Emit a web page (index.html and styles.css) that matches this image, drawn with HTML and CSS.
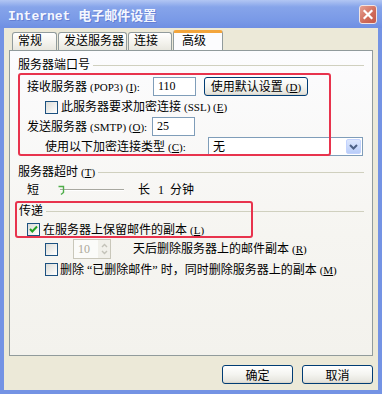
FILE: index.html
```html
<!DOCTYPE html>
<html>
    <head>
        <meta charset="utf-8">
        <title>Internet 电子邮件设置</title>
        <link rel="stylesheet" href="styles.css">
    </head>

    <body>
        <div class="window">
            <div class="titlebar">
                <span class="title">Internet 电子邮件设置</span>
                <span class="closeBtn">
                    <svg width="16" height="17" viewBox="0 0 16 17"><path d="M4.5 5 L11.5 12 M11.5 5 L4.5 12" stroke="#fff" stroke-width="2.2" stroke-linecap="square"/></svg>
                </span>
            </div>

            <div class="frame">
                <!-- tab strip -->
                <div class="tabs">
                    <span class="tab tabGeneral">常规</span>
                    <span class="tab tabSend">发送服务器</span>
                    <span class="tab tabConn">连接</span>
                    <span class="tab active">高级</span>
                </div>

                <div class="panel">
                    <div class="groupHead"><span>服务器端口号</span><i></i></div>

                    <div class="row rowPop">
                        <span class="lbl lblPop">接收服务器 <span class="en">(POP3) (<u>I</u>):</span></span>
                        <span class="field">110</span>
                        <span class="btn btnDefault">使用默认设置 <span class="en">(<u>D</u>)</span></span>
                    </div>
                    <div class="row rowSsl">
                        <span class="chk"></span>
                        <span class="chkText">此服务器要求加密连接 <span class="en">(SSL) (<u>E</u>)</span></span>
                    </div>
                    <div class="row rowSmtp">
                        <span class="lbl lblSmtp">发送服务器 <span class="en">(SMTP) (<u>O</u>):</span></span>
                        <span class="field">25</span>
                    </div>
                    <div class="row rowEnc">
                        <span class="lbl lblEnc">使用以下加密连接类型 <span class="en">(<u>C</u>):</span></span>
                        <span class="select">
                            <span>无</span>
                            <span class="dropBtn"><svg width="9" height="6" viewBox="0 0 9 6"><path d="M1 1 L4.5 4.5 L8 1" fill="none" stroke="#4d6185" stroke-width="2"/></svg></span>
                        </span>
                    </div>

                    <div class="groupHead headTimeout"><span>服务器超时 <span class="en">(<u>T</u>)</span></span><i></i></div>
                    <div class="row rowSlider">
                        <span class="shortLbl">短</span>
                        <svg class="slider" width="70" height="16" viewBox="0 0 70 16">
                            <line x1="4" y1="7.5" x2="68" y2="7.5" stroke="#a8a8a0"/>
                            <line x1="4" y1="8.5" x2="68" y2="8.5" stroke="#ffffff"/>
                            <path d="M2.5 4.5 H7.5 V10.5 L5 12.5" fill="none" stroke="#4fae4a" stroke-width="1.4"/>
                        </svg>
                        <span class="longLbl">长</span>
                        <span class="num">1</span>
                        <span>分钟</span>
                    </div>

                    <div class="groupHead headDeliver"><span>传递</span><i></i></div>
                    <div class="row rowKeep">
                        <span class="chk checked"><svg width="11" height="11" viewBox="0 0 11 11"><path d="M2 5 L4.3 7.5 L9 2.5" fill="none" stroke="#21a121" stroke-width="2"/></svg></span>
                        <span class="chkText">在服务器上保留邮件的副本 <span class="en">(<u>L</u>)</span></span>
                    </div>
                    <div class="row rowDays">
                        <span class="chk"></span>
                        <span class="spin">
                            <span>10</span>
                            <span class="spinBtns">
                                <svg width="9" height="16" viewBox="0 0 9 16"><path d="M2 6 L4.5 3.5 L7 6 M2 10 L4.5 12.5 L7 10" fill="none" stroke="#c3c2b8" stroke-width="1.4"/></svg>
                            </span>
                        </span>
                        <span class="daysText">天后删除服务器上的邮件副本 <span class="en">(<u>R</u>)</span></span>
                    </div>
                    <div class="row rowDel">
                        <span class="chk"></span>
                        <span class="delText">删除 “已删除邮件” 时，同时删除服务器上的副本 <span class="en">(<u>M</u>)</span></span>
                    </div>

                    <!-- red highlight marks drawn over the dialog -->
                    <div class="mark markPorts"></div>
                    <div class="mark markDeliver"></div>
                </div>

                <div class="buttons">
                    <span class="btn btnBottom">确定</span>
                    <span class="btn btnBottom">取消</span>
                </div>
            </div>
        </div>
    </body>
</html>
```

FILE: styles.css
```css
body {
    margin: 0;
    font-family: "Liberation Serif", "Noto Sans CJK SC", serif;
    font-size: 12px;
    color: #000;
}

.window {
    width: 382px;
    height: 394px;
    display: flex;
    flex-direction: column;
}

.titlebar {
    height: 28px;
    box-sizing: border-box;
    display: flex;
    align-items: center;
    justify-content: space-between;
    padding: 0 5px 0 8px;
    background: linear-gradient(#b2c6f3, #86a4ea 25%, #7a9ae7 70%, #6f8fe3);
}

.title {
    font-family: "Liberation Mono", "Noto Sans CJK SC", monospace;
    font-weight: bold;
    font-size: 13px;
    color: #f4f7ff;
    text-shadow: 1px 1px #6580d4;
}

.closeBtn {
    width: 18px;
    height: 19px;
    box-sizing: border-box;
    border: 1px solid #f2e4e2;
    border-radius: 3px;
    background: linear-gradient(135deg, #e6a194, #cf6a58 60%, #c45a4a);
    display: flex;
    align-items: center;
    justify-content: center;
}

.frame {
    flex: 1;
    background: #ece9d8;
    border: 4px solid #7493e4;
    border-top: 0;
    padding: 2px 5px 0;
}

/* Tabs */

.tabs {
    height: 20px;
    display: flex;
    align-items: flex-end;
    padding-left: 3px;
}

.tab {
    height: 18px;
    box-sizing: border-box;
    border: 1px solid #919b9c;
    border-bottom: 0;
    border-radius: 3px 3px 0 0;
    background: linear-gradient(#ffffff, #f3f2ec 60%, #e8e7df);
    line-height: 17px;
    padding-left: 5px;
    margin-right: 1px;
}

.tabGeneral { width: 45px; }
.tabSend { width: 69px; }
.tabConn { width: 44px; }

.tab.active {
    position: relative;
    width: 50px;
    height: 21px;
    margin-bottom: -1px;
    padding-left: 8px;
    line-height: 16px;
    border-top: 3px solid #f3a53c;
    background: #fcfcfe;
}

.panel {
    position: relative;
    height: 306px;
    box-sizing: border-box;
    border: 1px solid #919b9c;
    background: linear-gradient(#fcfcfe, #f6f5f1 60%, #f3f2ed);
    padding: 7px 8px 0;
}

.en {
    font-size: 11px;
}

.groupHead {
    height: 14px;
    display: flex;
    align-items: center;
    line-height: 14px;
    white-space: nowrap;
}

.groupHead i {
    flex: 1;
    height: 0;
    border-top: 1px solid #d0d0bf;
    margin-left: 3px;
}

.row {
    display: flex;
    align-items: center;
    line-height: 14px;
    white-space: nowrap;
}

.row > * {
    flex-shrink: 0;
}

.rowPop { height: 19px; margin-top: 5px; padding-left: 9px; }
.rowSsl { height: 16px; margin-top: 3px; padding-left: 27px; }
.rowSmtp { height: 19px; margin-top: 2px; padding-left: 9px; }
.rowEnc { height: 19px; margin-top: 1px; padding-left: 27px; }
.headTimeout { margin-top: 9px; }
.rowSlider { height: 16px; margin-top: 3px; padding-left: 9px; }
.headDeliver { margin-top: 6px; padding-left: 1px; }
.rowKeep { height: 15px; margin-top: 4px; padding-left: 9px; }
.rowDays { height: 20px; margin-top: 2px; padding-left: 27px; }
.rowDel { height: 15px; margin-top: 3px; padding-left: 27px; }

.lblPop { width: 126px; }
.lblSmtp { width: 125px; }
.lblEnc { width: 163px; }

.field {
    width: 43px;
    height: 19px;
    box-sizing: border-box;
    border: 1px solid #7f9db9;
    background: #fff;
    padding-left: 4px;
    line-height: 17px;
}

.btn {
    box-sizing: border-box;
    border: 1px solid #003c74;
    border-radius: 3px;
    background: linear-gradient(#ffffff, #f4f4f0 50%, #e6e5de 90%, #d6d0c5);
    display: flex;
    align-items: center;
    justify-content: center;
    white-space: pre;
}

.btnDefault {
    width: 104px;
    height: 19px;
    margin-left: 8px;
}

.chk {
    width: 13px;
    height: 13px;
    box-sizing: border-box;
    border: 1px solid #1c5180;
    background: linear-gradient(135deg, #dcdcd7, #ffffff);
    display: flex;
    align-items: center;
    justify-content: center;
}

.chkText { margin-left: 3px; }

.select {
    width: 155px;
    height: 19px;
    box-sizing: border-box;
    border: 1px solid #7f9db9;
    background: #fff;
    display: flex;
    align-items: center;
    justify-content: space-between;
    padding-left: 4px;
}

.dropBtn {
    width: 15px;
    height: 15px;
    margin-right: 1px;
    border-radius: 2px;
    background: linear-gradient(#dde7fd, #b9cdf9);
    border: 1px solid #c3d3fd;
    box-sizing: border-box;
    display: flex;
    align-items: center;
    justify-content: center;
}

.slider { margin-left: 17px; }
.longLbl { margin-left: 12px; }
.num { margin: 0 6px 0 8px; }

.spin {
    width: 38px;
    height: 20px;
    box-sizing: border-box;
    margin-left: 15px;
    border: 1px solid #c9c7ba;
    background: #fbfbf9;
    color: #aca899;
    display: flex;
    align-items: center;
    justify-content: space-between;
    padding-left: 4px;
}

.spinBtns {
    width: 12px;
    height: 18px;
    background: #f1f0ea;
    display: flex;
    align-items: center;
    justify-content: center;
}

.daysText { margin-left: 22px; }
.delText { margin-left: 2px; }

/* red annotation boxes */
.mark {
    position: absolute;
    border: 2px solid #e8334d;
    border-radius: 3px;
    box-sizing: border-box;
}

.markPorts { left: 8px; top: 22px; width: 313px; height: 83px; }
.markDeliver { left: 5px; top: 150px; width: 238px; height: 37px; }

.buttons {
    display: flex;
    justify-content: flex-end;
    gap: 9px;
    margin-top: 9px;
}

.btnBottom {
    width: 71px;
    height: 19px;
}
```
